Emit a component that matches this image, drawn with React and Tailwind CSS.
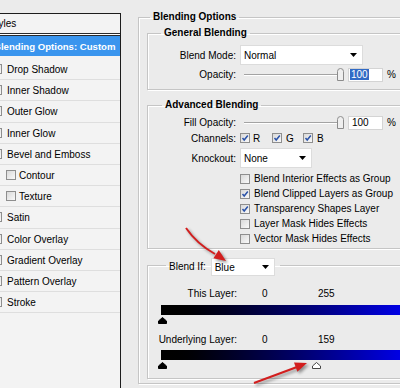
import React from "react";

const Check = ({ checked, className = "" }) => (
  <span
    className={
      "relative inline-flex shrink-0 w-[10px] h-[10px] border border-[#8e8e8e] bg-linear-to-br from-[#d9d9d9] to-[#f9f9f9] " +
      className
    }
  >
    {checked && (
      <svg viewBox="0 0 8 8" className="absolute left-0 top-0 w-[8px] h-[8px]">
        <path d="M1.5 4 L3.2 6 L6.8 1.5" fill="none" stroke="#2a52a8" strokeWidth="1.5" />
      </svg>
    )}
  </span>
);

const DownArrow = () => (
  <svg viewBox="0 0 7 4" className="w-[7px] h-[4px]">
    <path d="M0 0 L7 0 L3.5 4 Z" fill="#000" />
  </svg>
);

const Select = ({ value, className = "" }) => (
  <div
    className={
      "flex items-center justify-between bg-white border border-[#dcdcdc] pl-[3px] pr-[5px] " + className
    }
  >
    <span className="pt-[1px]">{value}</span>
    <DownArrow />
  </div>
);

const Slider = () => (
  <div className="flex items-center">
    <div className="w-[93px] h-[2px] border-t border-[#a3a3a3] border-b border-b-white" />
    <svg viewBox="0 0 7 13" className="w-[7px] h-[13px]">
      <path
        d="M0.5 3.5 Q0.5 0.5 3.5 0.5 Q6.5 0.5 6.5 3.5 L6.5 12.5 L0.5 12.5 Z"
        fill="#efefef"
        stroke="#8c8c8c"
      />
    </svg>
  </div>
);

const Label = ({ children, w = "w-[88px]" }) => (
  <span className={"shrink-0 text-right pt-[1px] " + w}>{children}</span>
);

const ListRow = ({ children, indent }) => (
  <div className="h-[21.2px] shrink-0 flex items-center border-b border-[#dedede] whitespace-nowrap">
    {indent ? (
      <>
        <Check className="ml-[6px]" />
        <span className="ml-[3px] pt-[2px]">{children}</span>
      </>
    ) : (
      <>
        <Check className="ml-[-8px]" />
        <span className="ml-[5px] pt-[2px]">{children}</span>
      </>
    )}
  </div>
);

const StylesList = () => (
  <div className="shrink-0 w-[121px] mt-[13px] border-t border-r border-[#1c1c1c] bg-[#f3f3f3] flex flex-col overflow-hidden">
    <div className="h-[20px] shrink-0 flex items-center border-b border-[#2a2a2a] whitespace-nowrap">
      <span className="ml-[-11px] pt-[1px]">Styles</span>
    </div>
    <div className="h-[1px] shrink-0 bg-white" />
    <div className="h-[21px] shrink-0 flex items-center border-t border-[#2a2a2a] bg-[#3a95ee] text-white font-bold text-[9.6px] whitespace-nowrap">
      <span className="ml-[-6px] pt-[2px]">Blending Options: Custom</span>
    </div>
    <div className="h-[3px] shrink-0" />
    <ListRow>Drop Shadow</ListRow>
    <ListRow>Inner Shadow</ListRow>
    <ListRow>Outer Glow</ListRow>
    <ListRow>Inner Glow</ListRow>
    <ListRow>Bevel and Emboss</ListRow>
    <ListRow indent>Contour</ListRow>
    <ListRow indent>Texture</ListRow>
    <ListRow>Satin</ListRow>
    <ListRow>Color Overlay</ListRow>
    <ListRow>Gradient Overlay</ListRow>
    <ListRow>Pattern Overlay</ListRow>
    <ListRow>Stroke</ListRow>
  </div>
);

const Box = "block min-w-0 p-0 m-0 w-[300px] border border-[#c5c5c5] shadow-[inset_1px_1px_0_#ffffff,1px_1px_0_#ffffff]";

const General = () => (
  <fieldset className={Box + " h-[63px]"}>
    <legend className="ml-[13px] px-[3px] font-bold leading-[12px]">General Blending</legend>
    <div className="pt-[6px] flex flex-col">
      <div className="h-[20px] flex items-center">
        <Label>Blend Mode:</Label>
        <Select value="Normal" className="ml-[4px] w-[123px] h-[20px]" />
      </div>
      <div className="h-[15px] mt-[2px] flex items-center">
        <Label>Opacity:</Label>
        <div className="ml-[8px]">
          <Slider />
        </div>
        <div className="ml-[4px] w-[35px] h-[14px] bg-white border border-[#d4d4d4] flex items-center pl-[1px]">
          <span className="bg-[#316ac5] text-white px-[1px] leading-[11px]">100</span>
        </div>
        <span className="ml-[4px]">%</span>
      </div>
    </div>
  </fieldset>
);

const Advanced = () => (
  <fieldset className={Box + " h-[150px] mt-[9px]"}>
    <legend className="ml-[14px] px-[3px] font-bold leading-[12px]">Advanced Blending</legend>
    <div className="pt-[4px] flex flex-col">
      <div className="h-[15px] flex items-center">
        <Label>Fill Opacity:</Label>
        <div className="ml-[8px]">
          <Slider />
        </div>
        <div className="ml-[4px] w-[35px] h-[14px] bg-white border border-[#d4d4d4] flex items-center pl-[3px]">
          100
        </div>
        <span className="ml-[4px]">%</span>
      </div>
      <div className="h-[16px] flex items-center">
        <Label>Channels:</Label>
        <div className="ml-[4px] w-[32px] flex items-center">
          <Check checked />
          <span className="ml-[3px] pt-[1px]">R</span>
        </div>
        <div className="w-[31px] flex items-center">
          <Check checked />
          <span className="ml-[4px] pt-[1px]">G</span>
        </div>
        <div className="flex items-center">
          <Check checked />
          <span className="ml-[4px] pt-[1px]">B</span>
        </div>
      </div>
      <div className="h-[20px] mt-[2px] flex items-center">
        <Label>Knockout:</Label>
        <Select value="None" className="ml-[4px] w-[72px] h-[20px]" />
      </div>
      <div className="mt-[3px] pl-[92px] flex flex-col">
        {[
          ["Blend Interior Effects as Group", false],
          ["Blend Clipped Layers as Group", true],
          ["Transparency Shapes Layer", true],
          ["Layer Mask Hides Effects", false],
          ["Vector Mask Hides Effects", false],
        ].map(([t, c]) => (
          <div key={t} className="h-[15px] flex items-center whitespace-nowrap">
            <Check checked={c} />
            <span className="ml-[4px] pt-[1px]">{t}</span>
          </div>
        ))}
      </div>
    </div>
  </fieldset>
);

const Marker = ({ white }) => (
  <svg viewBox="0 0 9 7" className="w-[9px] h-[7px]">
    <path
      d="M4.5 0.5 L8.5 4 L8.5 6.5 L0.5 6.5 L0.5 4 Z"
      fill={white ? "#ffffff" : "#000000"}
      stroke={white ? "#444444" : "#000000"}
      strokeWidth="1"
    />
  </svg>
);

const BlendIf = () => (
  <fieldset className={Box + " h-[120px] mt-[10px]"}>
    <legend className="ml-[18px] pl-[3px] pr-[5px] h-[12px] flex items-start font-normal">
      <span className="mt-[2px] leading-[12px]">Blend If:</span>
      <Select value="Blue" className="ml-[5px] mt-[-1px] w-[64px] h-[18px]" />
    </legend>
    <div className="flex flex-col">
      <div className="h-[12px] mt-[16px] flex items-center">
        <Label w="w-[89px]">This Layer:</Label>
        <span className="ml-[25px] w-[56px] pt-[1px]">0</span>
        <span className="pt-[1px]">255</span>
      </div>
      <div className="ml-[13px] mt-[6px] w-[260px] h-[10px] bg-linear-to-r from-[#000000] to-[#0000ff]" />
      <div className="ml-[10px] mt-[2px] h-[7px] flex">
        <Marker />
      </div>
      <div className="h-[12px] mt-[9px] flex items-center whitespace-nowrap">
        <Label w="w-[89px]">Underlying Layer:</Label>
        <span className="ml-[25px] w-[56px] pt-[1px]">0</span>
        <span className="pt-[1px]">159</span>
      </div>
      <div className="ml-[13px] mt-[5px] w-[260px] h-[10px] bg-linear-to-r from-[#000000] to-[#0000ff]" />
      <div className="ml-[10px] mt-[2px] h-[7px] flex">
        <Marker />
        <div className="ml-[145px]">
          <Marker white />
        </div>
      </div>
    </div>
  </fieldset>
);

const Arrows = () => (
  <svg
    className="absolute left-0 top-0 w-[400px] h-[388px] pointer-events-none drop-shadow-[2px_2px_1.5px_rgba(0,0,0,0.4)]"
    viewBox="0 0 400 388"
  >
    <path d="M186 228 Q197 244 215 254" fill="none" stroke="#d21e1e" strokeWidth="2" />
    <polygon points="226,261 213.4,258.2 218.8,250" fill="#d21e1e" />
    <path d="M254 383 L297 367" fill="none" stroke="#d21e1e" strokeWidth="2" />
    <polygon points="307,363 297.4,371.8 294,362.6" fill="#d21e1e" />
  </svg>
);

export default function App() {
  return (
    <div className="relative w-[400px] h-[388px] overflow-hidden bg-[#ebebeb] flex font-['Liberation_Sans',Arial,sans-serif] text-[10px] leading-[12px] text-black">
      <StylesList />
      <div className="shrink-0 pl-[17px] pt-[11px]">
        <fieldset className={Box + " h-[373px]"}>
          <legend className="ml-[11px] px-[3px] font-bold leading-[12px]">Blending Options</legend>
          <div className="pl-[8px] pt-[4px] flex flex-col">
            <General />
            <Advanced />
            <BlendIf />
          </div>
        </fieldset>
      </div>
      <Arrows />
    </div>
  );
}
